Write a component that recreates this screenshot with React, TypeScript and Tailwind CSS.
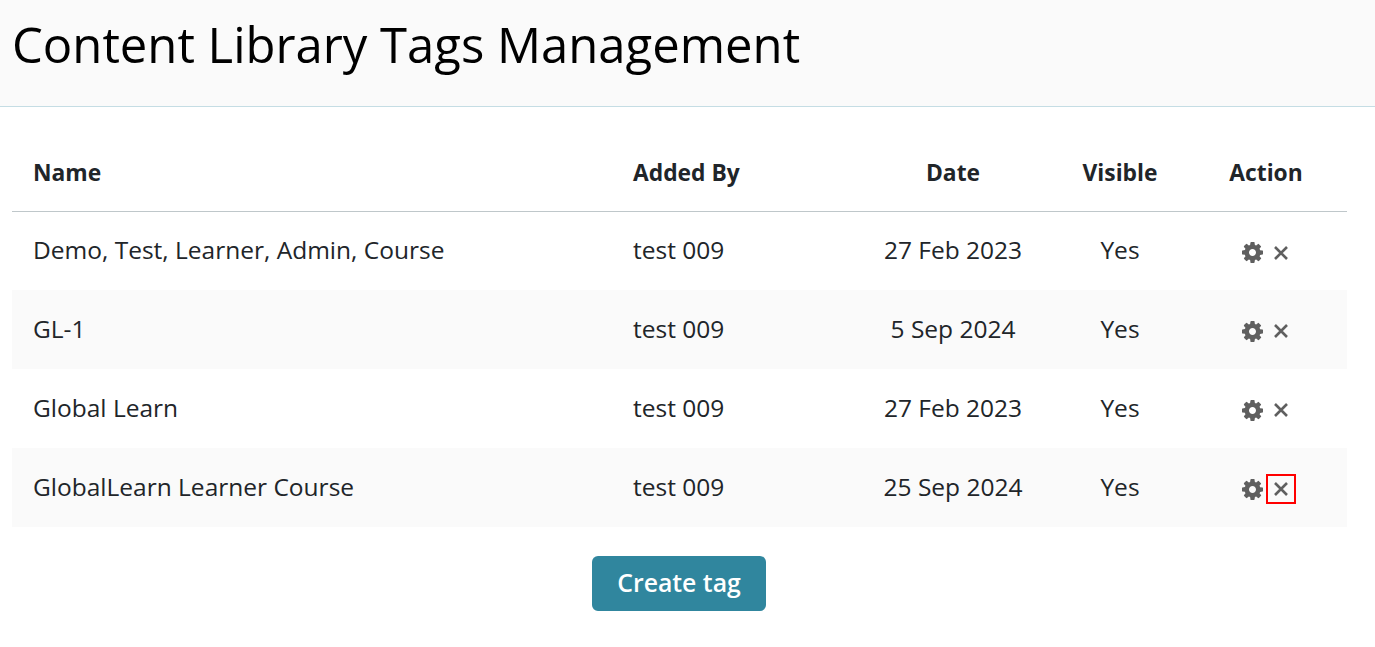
const rows = [
  { name: 'Demo, Test, Learner, Admin, Course', by: 'test 009', date: '27 Feb 2023', visible: 'Yes' },
  { name: 'GL-1', by: 'test 009', date: '5 Sep 2024', visible: 'Yes' },
  { name: 'Global Learn', by: 'test 009', date: '27 Feb 2023', visible: 'Yes' },
  { name: 'GlobalLearn Learner Course', by: 'test 009', date: '25 Sep 2024', visible: 'Yes' },
]

function GearIcon() {
  return (
    <svg width="21" height="21" viewBox="128 128 1536 1536" className="mr-[3px] block" fill="#5f5f5f">
      <path d="M1152 896q0-106-75-181t-181-75-181 75-75 181 75 181 181 75 181-75 75-181zm512-109v222q0 12-8 23t-20 13l-185 28q-19 54-39 91 35 50 107 138 10 12 10 25t-9 23q-27 37-99 108t-94 71q-12 0-26-9l-138-108q-44 23-91 38-16 136-29 186-7 28-36 28h-222q-14 0-24.5-8.5t-11.5-21.5l-28-184q-49-16-90-37l-141 107q-10 9-25 9-14 0-25-11-126-114-165-168-7-10-7-23 0-12 8-23 15-21 51-66.5t54-70.5q-27-50-41-99l-183-27q-13-2-21-12.5t-8-23.5v-222q0-12 8-23t19-13l186-28q14-46 39-92-40-57-107-138-10-12-10-24 0-10 9-23 26-36 98.5-107.5t94.5-71.5q13 0 26 10l138 107q44-23 91-38 16-136 29-186 7-28 36-28h222q14 0 24.5 8.5t11.5 21.5l28 184q49 16 90 37l142-107q9-9 24-9 13 0 25 10 129 119 165 170 7 8 7 22 0 12-8 23-15 21-51 66.5t-54 70.5q26 50 41 98l183 28q13 2 21 12.5t8 23.5z" />
    </svg>
  )
}

function CloseIcon() {
  return (
    <svg width="14" height="14" viewBox="0 0 14 14" className="block">
      <path d="M1 1 L13 13 M13 1 L1 13" stroke="#5f5f5f" strokeWidth="2.6" fill="none" />
    </svg>
  )
}

export default function App() {
  return (
    <div className="min-h-[647px] bg-white font-['Open_Sans',sans-serif] text-[#212529]">
      <div className="h-[107px] border-b border-[#c5dde4] bg-[#fafafa] px-3 pt-[11px]">
        <h1 className="text-[49px] leading-[66px] font-normal text-black">Content Library Tags Management</h1>
      </div>

      <div className="px-3 pt-[26px]">
        <table className="w-[1335px] table-fixed border-collapse text-[24.5px]">
          <thead>
            <tr className="h-[78px] border-b border-[#bfc7ca] text-[22.8px] font-bold">
              <th className="w-[600px] pt-[2px] pl-[21px] text-left font-bold">Name</th>
              <th className="w-[239px] pt-[2px] pl-[21px] text-left font-bold">Added By</th>
              <th className="w-[204px] pt-[2px] text-center font-bold">Date</th>
              <th className="w-[130px] pt-[2px] text-center font-bold">Visible</th>
              <th className="w-[162px] pt-[2px] text-center font-bold">Action</th>
            </tr>
          </thead>
          <tbody>
            {rows.map((row, i) => (
              <tr key={row.name} className={i % 2 === 1 ? 'h-[79px] bg-[#fafafa]' : 'h-[79px]'}>
                <td className="pl-[21px]">{row.name}</td>
                <td className="pl-[21px]">{row.by}</td>
                <td className="text-center">{row.date}</td>
                <td className="text-center">{row.visible}</td>
                <td>
                  <div className="flex items-center justify-center pt-[3.5px] pl-[6px]">
                    <GearIcon />
                    <span
                      className={
                        i === 3
                          ? 'flex h-[30px] w-[30px] items-center justify-center border-2 border-[#ff0000]'
                          : 'flex h-[30px] w-[30px] items-center justify-center'
                      }
                    >
                      <CloseIcon />
                    </span>
                  </div>
                </td>
              </tr>
            ))}
          </tbody>
        </table>

        <div className="flex justify-center pt-[29px] pr-[17px]">
          <button className="h-[55px] w-[174px] rounded-[6px] bg-[#30869e] pb-[2px] text-[24.8px] font-semibold text-white">
            Create tag
          </button>
        </div>
      </div>
    </div>
  )
}
